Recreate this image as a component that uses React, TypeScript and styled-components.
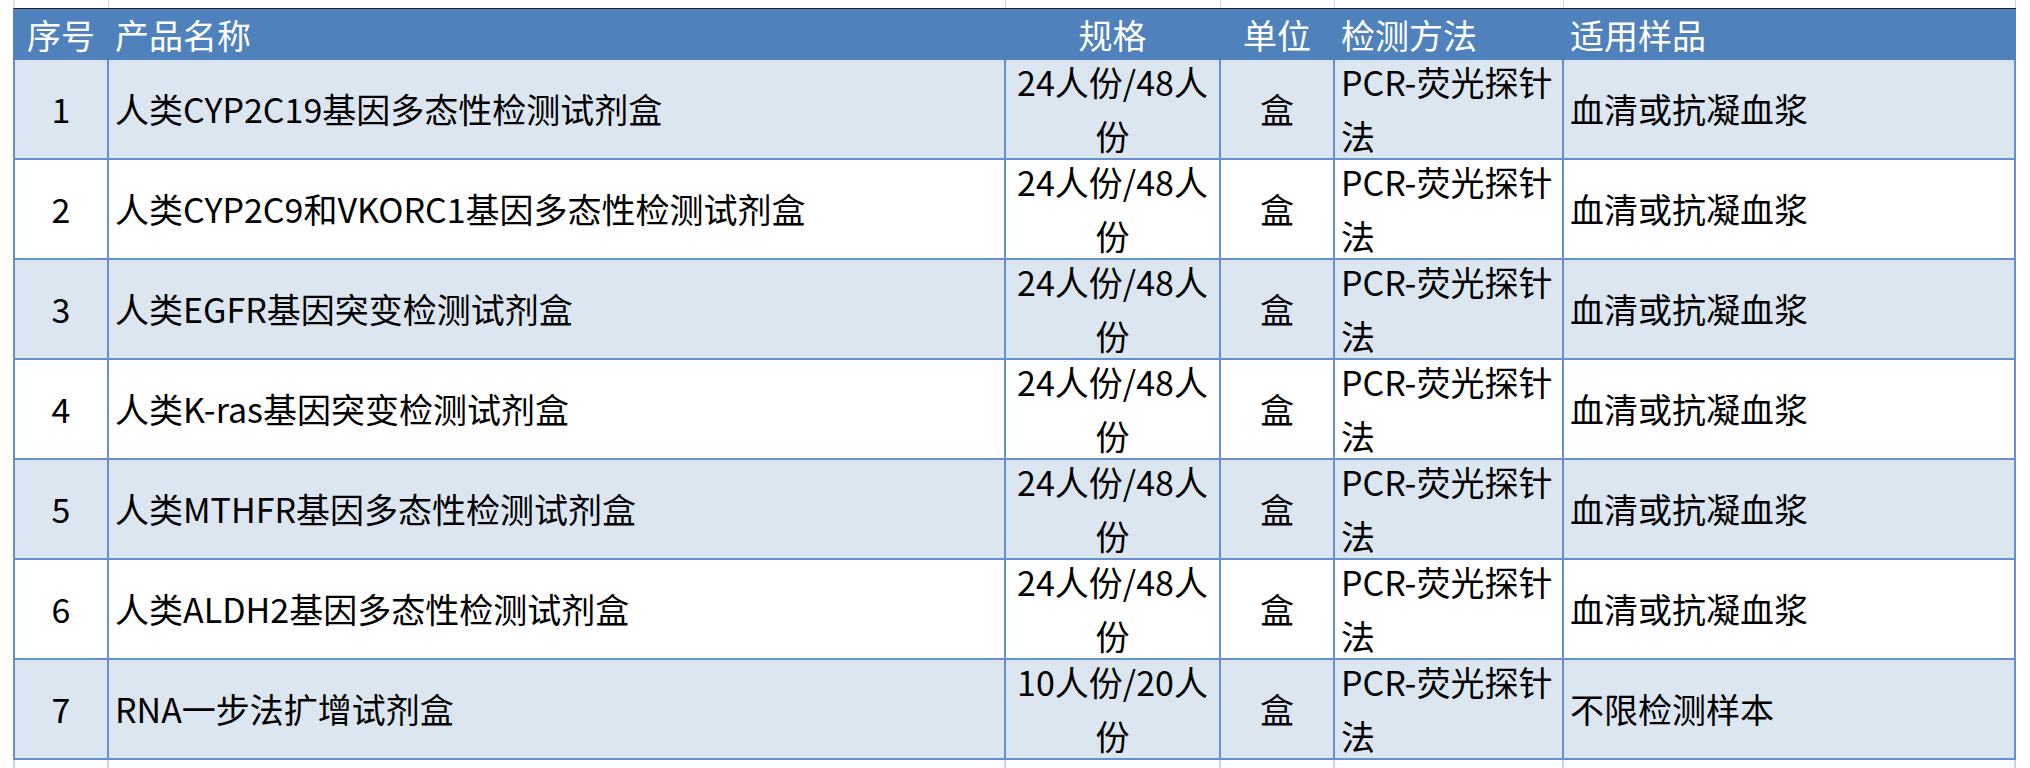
import React from "react";
import styled, { createGlobalStyle } from "styled-components";

const GlobalStyle = createGlobalStyle`
  html, body {
    margin: 0;
    padding: 0;
    background: #ffffff;
  }
  body {
    font-family: "Noto Sans CJK SC", "Noto Sans", sans-serif;
    color: #000;
  }
  * { box-sizing: border-box; }
`;

const COLS = "94px 897px 215px 114px 229px 452px";
const BORDER = "#6590cd";

const Page = styled.div`
  padding-left: 13px;
  width: 2030px;
  height: 768px;
  overflow: hidden;
`;

const Table = styled.div`
  display: inline-block;
  vertical-align: top;
`;

const TopStrip = styled.div`
  display: grid;
  grid-template-columns: ${COLS};
  grid-template-rows: 8px;
  height: 8px;
  border-left: 2px solid #e2e2e2;
`;

const StripCell = styled.div`
  border-right: 1px solid #d6d6d6;
`;

const HeaderRow = styled.div`
  display: grid;
  grid-template-columns: ${COLS};
  grid-template-rows: 51px;
  height: 52px;
  border-top: 1px solid #1f1f1f;
  border-left: 2px solid #4f81bd;
  background: #4f81bd;
  color: #ffffff;
`;

const BodyRow = styled.div<{ $shaded: boolean }>`
  display: grid;
  grid-template-columns: ${COLS};
  grid-template-rows: 98px;
  height: 100px;
  border-left: 2px solid ${BORDER};
  border-bottom: 2px solid ${BORDER};
  background: ${(p) => (p.$shaded ? "#dce6f1" : "#ffffff")};
`;

const TailRow = styled.div`
  display: grid;
  grid-template-columns: ${COLS};
  grid-template-rows: 40px;
  height: 40px;
  border-left: 2px solid #c9d6ea;
`;

const Cell = styled.div<{ $align: "left" | "center"; $head?: boolean }>`
  display: flex;
  flex-direction: column;
  justify-content: center;
  min-width: 0;
  min-height: 0;
  padding: 0 6px;
  border-right: 2px solid ${(p) => (p.$head ? "transparent" : BORDER)};
  font-size: 34px;
  line-height: ${(p) => (p.$head ? "51px" : "54px")};
  text-align: ${(p) => p.$align};
  white-space: normal;
  overflow: visible;
`;

const TailCell = styled.div`
  border-right: 2px solid #c9d6ea;
`;

type Item = {
  name: string;
  spec: string;
  sample: string;
};

const items: Item[] = [
  { name: "人类CYP2C19基因多态性检测试剂盒", spec: "24人份/48人份", sample: "血清或抗凝血浆" },
  { name: "人类CYP2C9和VKORC1基因多态性检测试剂盒", spec: "24人份/48人份", sample: "血清或抗凝血浆" },
  { name: "人类EGFR基因突变检测试剂盒", spec: "24人份/48人份", sample: "血清或抗凝血浆" },
  { name: "人类K-ras基因突变检测试剂盒", spec: "24人份/48人份", sample: "血清或抗凝血浆" },
  { name: "人类MTHFR基因多态性检测试剂盒", spec: "24人份/48人份", sample: "血清或抗凝血浆" },
  { name: "人类ALDH2基因多态性检测试剂盒", spec: "24人份/48人份", sample: "血清或抗凝血浆" },
  { name: "RNA一步法扩增试剂盒", spec: "10人份/20人份", sample: "不限检测样本" },
];

export default function App() {
  return (
    <>
      <GlobalStyle />
      <Page>
        <Table>
          <TopStrip>
            {Array.from({ length: 6 }).map((_, i) => (
              <StripCell key={i} />
            ))}
          </TopStrip>
          <HeaderRow>
            <Cell $head $align="center">序号</Cell>
            <Cell $head $align="left">产品名称</Cell>
            <Cell $head $align="center">规格</Cell>
            <Cell $head $align="center">单位</Cell>
            <Cell $head $align="left">检测方法</Cell>
            <Cell $head $align="left">适用样品</Cell>
          </HeaderRow>
          {items.map((it, i) => (
            <BodyRow key={i} $shaded={i % 2 === 0}>
              <Cell $align="center">{i + 1}</Cell>
              <Cell $align="left">{it.name}</Cell>
              <Cell $align="center">{it.spec}</Cell>
              <Cell $align="center">盒</Cell>
              <Cell $align="left">PCR-荧光探针法</Cell>
              <Cell $align="left">{it.sample}</Cell>
            </BodyRow>
          ))}
          <TailRow>
            {Array.from({ length: 6 }).map((_, i) => (
              <TailCell key={i} />
            ))}
          </TailRow>
        </Table>
      </Page>
    </>
  );
}
